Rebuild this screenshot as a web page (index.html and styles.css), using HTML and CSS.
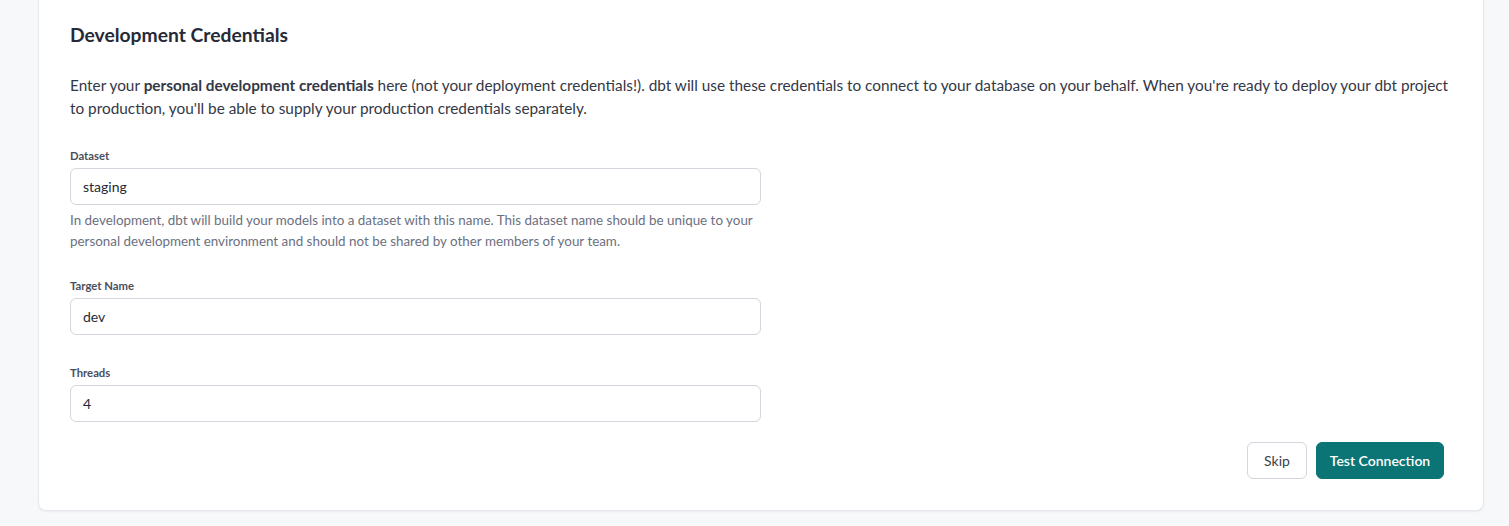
FILE: index.html
```html
<!DOCTYPE html>
<html>
<head>
<meta charset="utf-8">
<link rel="stylesheet" href="styles.css">
</head>
<body>
<div class="page">
  <section class="card">
    <h2 class="title">Development Credentials</h2>
    <p class="intro">Enter your <strong>personal development credentials</strong> here (not your deployment credentials!). dbt will use these credentials to connect to your database on your behalf. When you're ready to deploy your dbt project to production, you'll be able to supply your production credentials separately.</p>
    <div class="field">
      <label class="label">Dataset</label>
      <div class="input">staging</div>
      <p class="help">In development, dbt will build your models into a dataset with this name. This dataset name should be unique to your personal development environment and should not be shared by other members of your team.</p>
    </div>
    <div class="field">
      <label class="label">Target Name</label>
      <div class="input">dev</div>
    </div>
    <div class="field">
      <label class="label">Threads</label>
      <div class="input">4</div>
    </div>
    <div class="actions">
      <button class="btn btn-secondary">Skip</button>
      <button class="btn btn-primary">Test Connection</button>
    </div>
  </section>
</div>
</body>
</html>
```
FILE: styles.css
```css
html, body {
  margin: 0;
  padding: 0;
  background: #f7f8fa;
  font-family: "Lato", "Open Sans", sans-serif;
  color: #262a38;
}
.page {
  padding: 0 25px 14px 38px;
  margin-top: -20px;
}
.card {
  background: #fff;
  border: 1px solid #e6e8ec;
  border-top: none;
  border-radius: 0 0 8px 8px;
  box-shadow: 0 1px 2px rgba(20, 30, 50, 0.06);
  padding: 42px 31px 31px 31px;
}
.title {
  margin: 0;
  font-size: 19.3px;
  line-height: 25px;
  font-weight: 700;
  color: #262a38;
}
.intro {
  margin: 27px 0 0;
  font-size: 15.35px;
  line-height: 23px;
  color: #343846;
}
.intro strong { font-weight: 700; }
.field {
  width: 691px;
  margin-top: 29px;
}
.field + .field { margin-top: 31px; }
.field:nth-of-type(2) { margin-top: 27px; }
.label {
  display: block;
  font-size: 11.3px;
  line-height: 14px;
  font-weight: 700;
  color: #4a4f5c;
  margin-bottom: 5px;
}
.input {
  box-sizing: border-box;
  height: 37px;
  border: 1px solid #d3d6dc;
  border-radius: 6px;
  padding: 0 12px;
  font-size: 14px;
  line-height: 35px;
  color: #262a38;
}
.help {
  margin: 5px 0 0;
  font-size: 13.4px;
  line-height: 21px;
  color: #6b7080;
}
.actions {
  display: flex;
  justify-content: flex-end;
  gap: 9px;
  margin-top: 20px;
  padding-right: 8px;
}
.btn {
  box-sizing: border-box;
  height: 37px;
  border-radius: 6px;
  font-family: inherit;
  font-size: 14px;
  padding: 0;
  white-space: nowrap;
  cursor: pointer;
}
.btn-secondary {
  background: #fff;
  border: 1px solid #d3d6dc;
  color: #3a3f4c;
  width: 60px;
}
.btn-primary {
  background: #0b7475;
  border: 1px solid #0b7475;
  color: #fff;
  font-weight: 600;
  width: 128px;
}
```
